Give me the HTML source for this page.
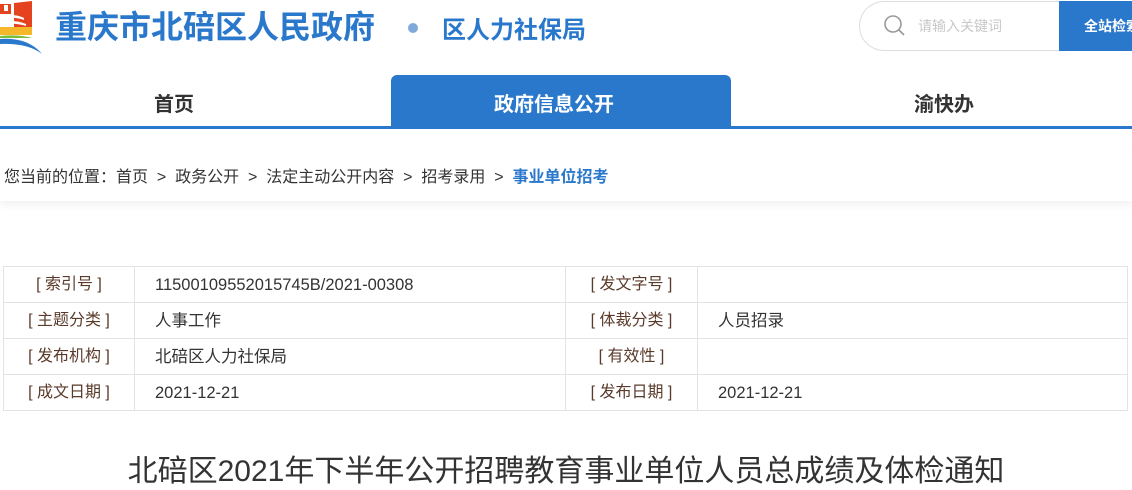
<!DOCTYPE html>
<html><head><meta charset="utf-8"><style>
*{margin:0;padding:0;box-sizing:border-box}
body{width:1132px;height:488px;overflow:hidden;background:#fff;font-family:"Liberation Sans","Noto Sans CJK SC",sans-serif;position:relative}
.abs{position:absolute}
.t1{left:55px;top:2px;font-size:32px;font-weight:bold;color:#2a78cc;white-space:nowrap}
.dot{left:408px;top:23px;width:10px;height:10px;border-radius:50%;background:#7fa9db}
.t2{left:442px;top:10px;font-size:24px;font-weight:bold;color:#2a78cc;white-space:nowrap}
.search{left:859px;top:1px;width:202px;height:50px;border:1px solid #ddd;border-right:none;border-radius:25px 0 0 25px}
.btn{left:1059px;top:1px;width:73px;height:50px;background:#2a78cc;color:#fff;font-size:14px;font-weight:bold;line-height:50px;padding-left:25px;white-space:nowrap;overflow:hidden}
.ph{left:918px;top:16px;font-size:14px;color:#c8c8c8}
.nav{top:88px;font-size:20px;font-weight:bold;color:#333}
.tab{left:391px;top:75px;width:340px;height:53px;background:#2a78cc;border-radius:6px 6px 0 0}
.line{left:0;top:126px;width:1132px;height:3px;background:#2a78cc}
.bc{left:0;top:148px;width:1132px;height:53px;background:#fff;box-shadow:0 4px 8px rgba(0,0,0,.06)}
.bct{left:4px;top:163px;font-size:16px;color:#333;white-space:nowrap}
table{position:absolute;left:3px;top:266px;border-collapse:collapse;font-size:16px;color:#333}
td{border:1px solid #e3e3e3;height:36px;line-height:20px}
td.l{text-align:center;color:#5a3a2a}
td.v{padding-left:20px;font-size:16.5px}
.title{left:0;width:1132px;top:446px;text-align:center;font-size:30px;color:#333;white-space:nowrap}
</style></head><body>
<svg class="abs" style="left:0;top:0" width="45" height="56" viewBox="0 0 45 56">
<path d="M14 3 L32 1 L32 30 L14 30Z" fill="#e5431f"/>
<path d="M0 4 L11 4 L11 14 L0 14Z" fill="#e5431f"/>
<rect x="4" y="5" width="4" height="6" fill="#fff"/>
<path d="M0 16 Q14 13 24 18 L24 20 Q14 16 0 19Z" fill="#fff"/>
<path d="M0 22 Q14 19 26 24 L26 26 Q14 22 0 25Z" fill="#fff"/>
<path d="M0 27 L32 27 L32 35 L0 35Z" fill="#f5b82a"/>
<path d="M0 36 Q18 34 32 38 L0 38Z" fill="#7cbd3a"/>
<path d="M0 39 Q28 37 42 54 Q28 43 0 44Z" fill="#2a78cc"/>
</svg>
<div class="abs t1">重庆市北碚区人民政府</div>
<div class="abs dot"></div>
<div class="abs t2">区人力社保局</div>
<div class="abs search"></div>
<svg class="abs" style="left:883px;top:14px" width="24" height="24" viewBox="0 0 24 24"><circle cx="10" cy="10" r="8" fill="none" stroke="#999" stroke-width="1.6"/><path d="M16 16 L21 21" stroke="#999" stroke-width="1.6"/></svg>
<div class="abs ph">请输入关键词</div>
<div class="abs btn">全站检索</div>
<div class="abs tab"></div>
<div class="abs nav" style="left:154px">首页</div>
<div class="abs nav" style="left:494px;color:#fff">政府信息公开</div>
<div class="abs nav" style="left:914px">渝快办</div>
<div class="abs line"></div>
<div class="abs bc"></div>
<div class="abs bct">您当前的位置：首页 &nbsp;&gt;&nbsp; 政务公开 &nbsp;&gt;&nbsp; 法定主动公开内容 &nbsp;&gt;&nbsp; 招考录用 &nbsp;&gt;&nbsp; <span style="color:#2a78cc;font-weight:bold">事业单位招考</span></div>
<table>
<tr><td class="l" style="width:131px">[ 索引号 ]</td><td class="v" style="width:431px">11500109552015745B/2021-00308</td><td class="l" style="width:132px">[ 发文字号 ]</td><td class="v" style="width:430px"></td></tr>
<tr><td class="l">[ 主题分类 ]</td><td class="v">人事工作</td><td class="l">[ 体裁分类 ]</td><td class="v">人员招录</td></tr>
<tr><td class="l">[ 发布机构 ]</td><td class="v">北碚区人力社保局</td><td class="l">[ 有效性 ]</td><td class="v"></td></tr>
<tr><td class="l">[ 成文日期 ]</td><td class="v">2021-12-21</td><td class="l">[ 发布日期 ]</td><td class="v">2021-12-21</td></tr>
</table>
<div class="abs title">北碚区2021年下半年公开招聘教育事业单位人员总成绩及体检通知</div>
</body></html>
